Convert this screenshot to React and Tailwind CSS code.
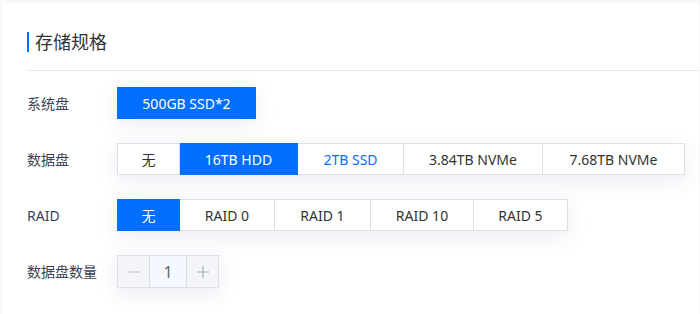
import React from "react";

const font = { fontFamily: '"Noto Sans", "Noto Sans CJK SC", sans-serif' };

function Group({ items }) {
  return (
    <div className="flex shadow-[0_6px_22px_rgba(40,60,130,0.09)]">
      {items.map((it, i) => (
        <div
          key={i}
          className={
            "h-[32px] flex items-center justify-center text-[14px] border-y border-r " +
            (i === 0 ? "border-l " : "") +
            (it.sel
              ? "bg-[#006eff] text-white border-[#006eff]"
              : it.blue
              ? "bg-white text-[#006eff] border-[#dcdfe6]"
              : "bg-white text-[#333] border-[#dcdfe6]")
          }
          style={{ width: it.w }}
        >
          {it.t}
        </div>
      ))}
    </div>
  );
}

function Row({ label, children }) {
  return (
    <div className="flex items-center">
      <div className="w-[90px] text-[14px] text-[#3a4258]">{label}</div>
      {children}
    </div>
  );
}

export default function App() {
  return (
    <div className="bg-[#f7f8fa] pt-[3px] pl-[2px] pr-px h-[314px]" style={font}>
      <div className="bg-white h-full pl-[25px]">
        <div className="pt-[28px] flex items-center h-[50px]">
          <div className="w-[2px] h-[20px] bg-[#006eff]" />
          <div className="ml-[6px] text-[18px] text-[#333] leading-none">存储规格</div>
        </div>
        <div className="h-px bg-[#e5e5e5] mt-[17px]" />
        <div className="flex flex-col gap-[24px] pt-[16px]">
          <Row label="系统盘">
            <Group items={[{ t: "500GB SSD*2", w: 139, sel: true }]} />
          </Row>
          <Row label="数据盘">
            <Group
              items={[
                { t: "无", w: 63 },
                { t: "16TB HDD", w: 118, sel: true },
                { t: "2TB SSD", w: 106, blue: true },
                { t: "3.84TB NVMe", w: 139 },
                { t: "7.68TB NVMe", w: 142 },
              ]}
            />
          </Row>
          <Row label="RAID">
            <Group
              items={[
                { t: "无", w: 63, sel: true },
                { t: "RAID 0", w: 95 },
                { t: "RAID 1", w: 96 },
                { t: "RAID 10", w: 103 },
                { t: "RAID 5", w: 94 },
              ]}
            />
          </Row>
          <Row label="数据盘数量">
            <div className="flex h-[33px] border border-[#dcdfe6] shadow-[0_6px_22px_rgba(40,60,130,0.09)]">
              <div className="w-[32px] bg-[#f3f5f8] flex items-center justify-center border-r border-[#dcdfe6]">
                <svg width="12" height="12" viewBox="0 0 12 12">
                  <path d="M0 6h12" stroke="#c5c9d1" strokeWidth="1.2" />
                </svg>
              </div>
              <div className="w-[37px] bg-[#f5f9ff] flex items-center justify-center text-[16px] text-[#666] border-r border-[#dcdfe6]">
                1
              </div>
              <div className="w-[31px] bg-[#f3f5f8] flex items-center justify-center">
                <svg width="12" height="12" viewBox="0 0 12 12">
                  <path d="M0 6h12M6 0v12" stroke="#a9aeb8" strokeWidth="1.2" />
                </svg>
              </div>
            </div>
          </Row>
        </div>
      </div>
    </div>
  );
}
